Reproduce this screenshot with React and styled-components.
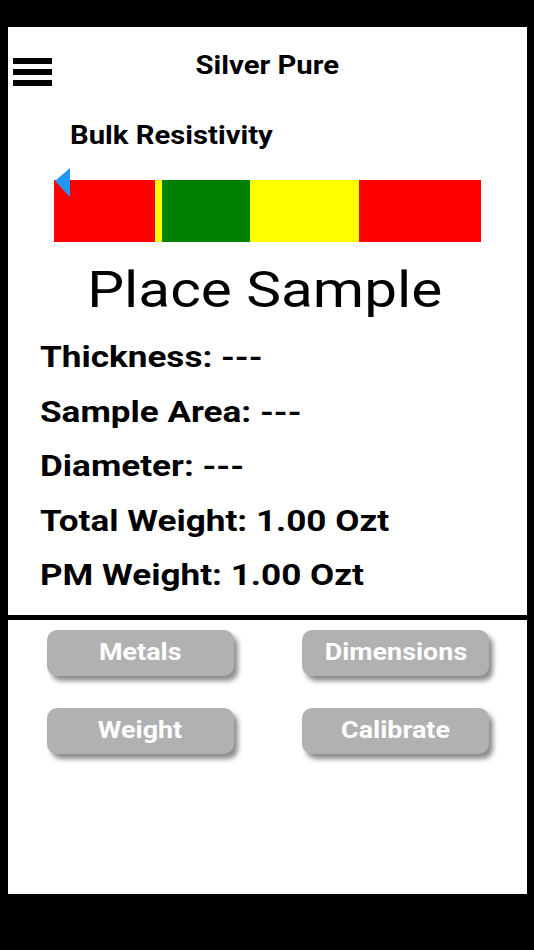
import React from 'react';
import styled, { createGlobalStyle } from 'styled-components';

const GlobalStyle = createGlobalStyle`
	html, body {
		margin: 0;
		padding: 0;
		background: #000;
	}
	body {
		font-family: Roboto, 'Noto Sans', 'Liberation Sans', sans-serif;
		color: #000;
	}
`;

// the device renders its text a bit wider than Roboto does
const Wide = styled.span`
	display: inline-block;
	white-space: nowrap;
	transform: scaleX(1.17);
	transform-origin: ${({ $origin }) => $origin || 'center'};
`;

const Screen = styled.div`
	margin: 27px 7px 0 8px;
	width: 519px;
	height: 867px;
	background: #fff;
	display: flex;
	flex-direction: column;
`;

const Header = styled.header`
	display: grid;
	grid-template-columns: 1fr auto 1fr;
	align-items: start;
	padding: 24px 5px 0;
	height: 70px;
`;

const Menu = styled.div`
	display: flex;
	flex-direction: column;
	gap: 5px;
	width: 39px;
	margin-top: 7px;

	span {
		display: block;
		height: 6px;
		background: #000;
	}
`;

const Title = styled.h1`
	margin: 0;
	font-size: 25px;
	font-weight: 700;
	line-height: 30px;
`;

const Gauge = styled.section`
	padding: 0 46px;
`;

const GaugeLabel = styled.h2`
	margin: 0 0 29px 16px;
	font-size: 25px;
	font-weight: 700;
	line-height: 30px;
`;

const Scale = styled.div`
	position: relative;
	display: flex;
	height: 62px;
	width: 427px;
`;

const Segment = styled.div`
	width: ${({ $w }) => $w}px;
	background: ${({ $color }) => $color};
`;

const Pointer = styled.svg`
	position: absolute;
	left: 1px;
	top: -12px;
`;

const Status = styled.div`
	margin: 18px 6px 0 0;
	text-align: center;
	font-size: 50px;
	font-weight: 400;
	line-height: 60px;
`;

const Readings = styled.div`
	padding: 10px 0 0 32px;
	display: flex;
	flex-direction: column;
`;

const Reading = styled.div`
	font-size: 30px;
	font-weight: 700;
	line-height: 54.5px;
`;

const Divider = styled.hr`
	margin: 12px 0 0;
	border: 0;
	height: 5px;
	background: #000;
`;

const ButtonGrid = styled.div`
	display: grid;
	grid-template-columns: 187px 187px;
	column-gap: 68px;
	row-gap: 32px;
	padding: 10px 0 0 39px;
`;

const Button = styled.button`
	height: 46px;
	border: 0;
	border-radius: 10px;
	background: #b1b1b1;
	color: #fff;
	font-family: inherit;
	font-size: 23px;
	font-weight: 700;
	box-shadow: 4px 5px 5px rgba(0, 0, 0, 0.45);
	cursor: pointer;
`;

const segments = [
	{ w: 101, color: '#ff0000' },
	{ w: 7, color: '#ffff00' },
	{ w: 88, color: '#008000' },
	{ w: 109, color: '#ffff00' },
	{ w: 122, color: '#ff0000' },
];

const readings = [
	'Thickness: ---',
	'Sample Area: ---',
	'Diameter: ---',
	'Total Weight: 1.00 Ozt',
	'PM Weight: 1.00 Ozt',
];

const buttons = ['Metals', 'Dimensions', 'Weight', 'Calibrate'];

const App = () => (
	<>
		<GlobalStyle />
		<Screen>
			<Header>
				<Menu>
					<span />
					<span />
					<span />
				</Menu>
				<Title>
					<Wide>Silver Pure</Wide>
				</Title>
				<div />
			</Header>
			<Gauge>
				<GaugeLabel>
					<Wide $origin="left">Bulk Resistivity</Wide>
				</GaugeLabel>
				<Scale>
					{segments.map((s, i) => (
						<Segment key={i} $w={s.w} $color={s.color} />
					))}
					<Pointer width="16" height="30" viewBox="0 0 16 30">
						<polygon points="15,0 15,29 0,13" fill="#2196f3" />
					</Pointer>
				</Scale>
			</Gauge>
			<Status>
				<Wide>Place Sample</Wide>
			</Status>
			<Readings>
				{readings.map(r => (
					<Reading key={r}>
						<Wide $origin="left">{r}</Wide>
					</Reading>
				))}
			</Readings>
			<Divider />
			<ButtonGrid>
				{buttons.map(b => (
					<Button key={b}>
						<Wide>{b}</Wide>
					</Button>
				))}
			</ButtonGrid>
		</Screen>
	</>
);

export default App;
